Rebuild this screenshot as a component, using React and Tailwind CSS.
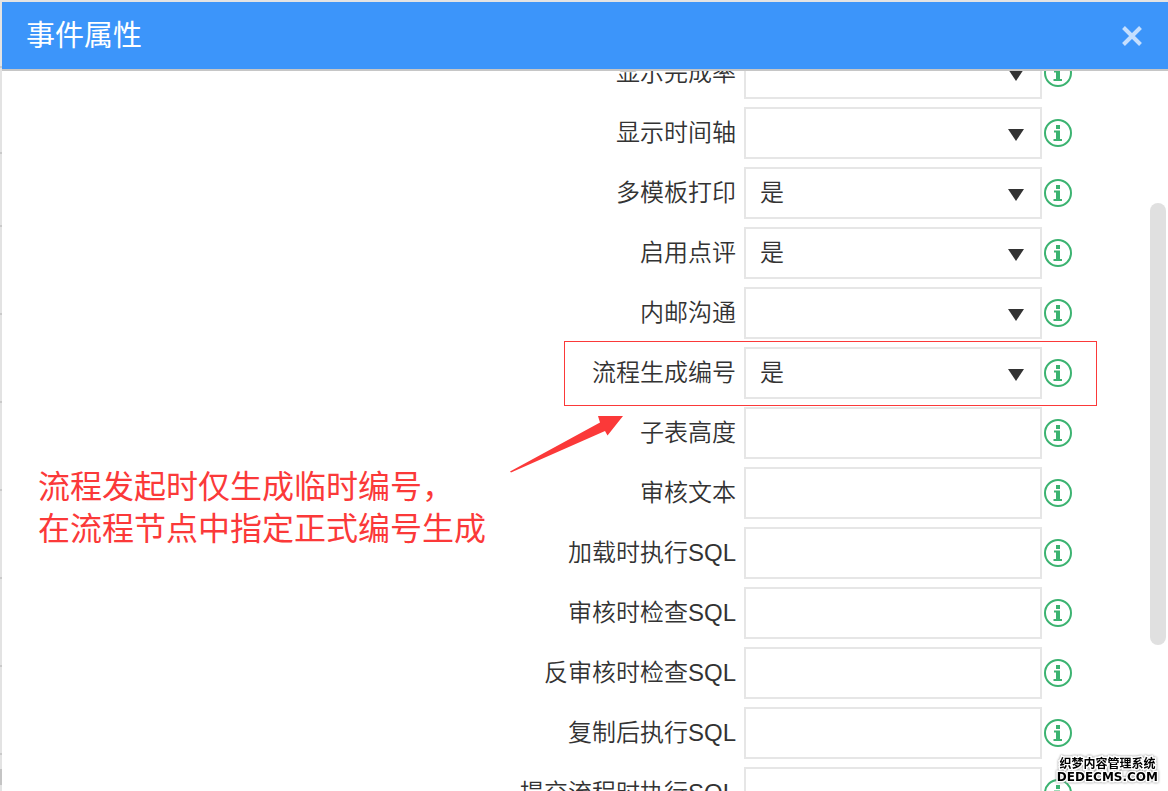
import React, { useState } from 'react';

const FIELDS = [
    { id: 'showRate', label: '显示完成率', type: 'select', value: '' },
    { id: 'showTimeline', label: '显示时间轴', type: 'select', value: '' },
    { id: 'multiPrint', label: '多模板打印', type: 'select', value: '是' },
    { id: 'enableComment', label: '启用点评', type: 'select', value: '是' },
    { id: 'innerMail', label: '内邮沟通', type: 'select', value: '' },
    { id: 'flowNumber', label: '流程生成编号', type: 'select', value: '是', highlighted: true },
    { id: 'subTableHeight', label: '子表高度', type: 'text', value: '' },
    { id: 'auditText', label: '审核文本', type: 'text', value: '' },
    { id: 'loadSql', label: '加载时执行SQL', type: 'text', value: '' },
    { id: 'auditCheckSql', label: '审核时检查SQL', type: 'text', value: '' },
    { id: 'unauditCheckSql', label: '反审核时检查SQL', type: 'text', value: '' },
    { id: 'copySql', label: '复制后执行SQL', type: 'text', value: '' },
    { id: 'submitSql', label: '提交流程时执行SQL', type: 'text', value: '' },
];

const InfoIcon = () => (
    <svg viewBox="0 0 28 28" className="block size-7" aria-hidden="true">
        <circle cx="14" cy="14" r="13" fill="none" stroke="#3cb371" strokeWidth="2" />
        <path d="M12 6h4v4h-4zM10 11.500h6v8.500h2v2H9.500v-2H12v-6.500h-2z" fill="#3cb371" />
    </svg>
);

const FieldRow = ({ field, value, onChange }) => {
    const boxStyle = 'block h-[52px] w-full rounded-none border-2 border-[#e6e6e6] bg-white px-3.5 text-[24px] text-[#333] outline-none';

    return (
        <div className="relative flex h-[60px] shrink-0 items-center">
            <label htmlFor={field.id} className="flex-1 pr-2 text-right text-[24px] leading-8">
                {field.label}
            </label>

            <div className="relative w-[298px]">
                {field.type === 'select' ? (
                    <>
                        <select
                            id={field.id}
                            value={value}
                            onChange={onChange}
                            className={`${boxStyle} appearance-none`}
                        >
                            <option value=""></option>
                            <option value="是">是</option>
                            <option value="否">否</option>
                        </select>
                        <svg viewBox="0 0 16 12" className="pointer-events-none absolute top-[22px] right-[18px] h-3 w-4">
                            <path d="M0 0h16L8 12z" fill="#333" />
                        </svg>
                    </>
                ) : (
                    <input id={field.id} type="text" value={value} onChange={onChange} className={boxStyle} />
                )}
            </div>

            <button type="button" aria-label={`${field.label}说明`} className="ml-0.5">
                <InfoIcon />
            </button>

            {/* Red frame and arrow around the explained field */}
            {field.highlighted && (
                <>
                    <div className="pointer-events-none absolute -top-0.5 -right-[25px] h-[65px] w-[533px] border border-[#fb3939]" />
                    <svg viewBox="0 0 113 58" className="pointer-events-none absolute top-[72px] right-[449px] h-[58px] w-[113px]">
                        <path d="M0 56.500L90 7.500L88 1H113L97.500 20.500L95 16L1 57.500z" fill="#fb3939" />
                    </svg>
                </>
            )}
        </div>
    );
};

// Strip of the page that stays visible left of the dialog
const PageEdge = () => (
    <div className="flex w-0.5 shrink-0 flex-col bg-[#e3e3e3]">
        <div className="h-[68px] shrink-0 border-b-2 border-[#cacaca]" />
        <div className="h-[86px] shrink-0 border-b-2 border-[#cacaca]" />
        <div className="h-[73px] shrink-0 border-b-2 border-[#cacaca]" />
        {[1, 2, 3, 4, 5, 6].map(n => (
            <div key={n} className="h-[88px] shrink-0 border-b-2 border-[#cacaca]" />
        ))}
        <div className="mt-3.5 h-4 shrink-0 bg-[#c4c4c4]" />
    </div>
);

const App = () => {
    const [values, setValues] = useState(
        Object.fromEntries(FIELDS.map(f => [f.id, f.value]))
    );

    return (
        <div className="flex h-screen overflow-hidden bg-[#e3e3e3] font-['Liberation_Sans','Noto_Sans_CJK_SC',sans-serif] font-[350] text-[#333]">
            <PageEdge />

            <div className="relative mt-0.5 flex min-w-0 flex-1 flex-col bg-white">
                {/* Header */}
                <header className="flex h-[69px] shrink-0 items-center justify-between border-b-2 border-[#c6c6c6] bg-[#3c95fa] pr-6 pl-6">
                    <h1 className="text-[29px] leading-10 font-normal text-white">事件属性</h1>
                    <button type="button" aria-label="关闭">
                        <svg viewBox="0 0 24 24" className="block size-6">
                            <path d="M3.500 3.500l17 17M20.500 3.500l-17 17" stroke="#c5dffe" strokeWidth="4" />
                        </svg>
                    </button>
                </header>

                {/* Form, scrolled part of the way down */}
                <main className="relative min-h-0 flex-1 overflow-hidden">
                    <form className="-mt-7 flex flex-col pr-24">
                        {FIELDS.map(field => (
                            <FieldRow
                                key={field.id}
                                field={field}
                                value={values[field.id]}
                                onChange={e => setValues({ ...values, [field.id]: e.target.value })}
                            />
                        ))}
                    </form>

                    <p className="absolute top-[395px] left-9 text-[32px] leading-[42px] font-normal text-[#fb3939]">
                        流程发起时仅生成临时编号，<br />
                        在流程节点中指定正式编号生成
                    </p>

                    <div className="absolute top-[132px] right-0.5 h-[442px] w-4 rounded-full bg-[#e0e0e0]" />
                </main>

                {/* Watermark */}
                <div className="absolute right-2.5 bottom-2 text-center text-[12px] font-bold text-black [paint-order:stroke_fill] [-webkit-text-stroke:3px_white] drop-shadow-[0_0_1px_#888]">
                    <div className="leading-[14px]">织梦内容管理系统</div>
                    <div className="font-['DejaVu_Sans',sans-serif] leading-3">DEDECMS.COM</div>
                </div>
            </div>
        </div>
    );
};

export default App;
